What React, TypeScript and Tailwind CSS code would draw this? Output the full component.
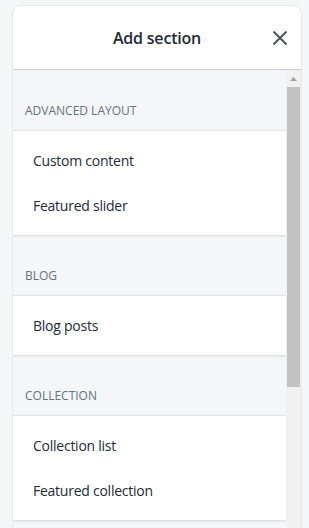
import React from "react";

const sections = [
  { title: "ADVANCED LAYOUT", items: ["Custom content", "Featured slider"] },
  { title: "BLOG", items: ["Blog posts"] },
  { title: "COLLECTION", items: ["Collection list", "Featured collection"] },
];

export default function App() {
  return (
    <div
      className="w-[309px] h-[528px] overflow-hidden bg-[#f4f6f8] pl-[13px] pr-[8px] pt-[6px]"
      style={{ fontFamily: '"Segoe UI", "Open Sans", "Noto Sans", sans-serif' }}
    >
      <div className="h-[540px] flex flex-col bg-white rounded-t-[8px] shadow-[0_0_0_1px_#e6e9ec] overflow-hidden">
        <div className="h-[64px] shrink-0 relative flex items-center justify-center border-b border-[#c4cdd5]">
          <span className="text-[16px] font-semibold text-[#212b36] tracking-[-0.2px]">Add section</span>
          <svg
            className="absolute left-[259px] top-[24px]"
            width="16"
            height="16"
            viewBox="0 0 16 16"
            fill="none"
          >
            <path d="M1.5 1.5L14.5 14.5M14.5 1.5L1.5 14.5" stroke="#454f5b" strokeWidth="1.8" />
          </svg>
        </div>
        <div className="flex flex-1 bg-[#f4f6f8]">
          <div className="flex-1 flex flex-col">
            {sections.map((s) => (
              <div key={s.title}>
                <div className="h-[60px] pl-[12px] pt-[33px] text-[12px] leading-[16px] text-[#637381]">
                  {s.title}
                </div>
                <div className="bg-white py-[7px] border-t border-[#e3e6e9] shadow-[0_1px_2px_0_rgba(63,63,68,0.18)]">
                  {s.items.map((it) => (
                    <div
                      key={it}
                      className="h-[45px] flex items-center pl-[20px] text-[14px] tracking-[-0.25px] text-[#212b36]"
                    >
                      {it}
                    </div>
                  ))}
                </div>
              </div>
            ))}
          </div>
          <div className="w-[15px] shrink-0 bg-[#f1f1f1] flex flex-col items-center">
            <div className="h-[17px] w-full flex items-center justify-center">
              <svg width="7" height="4" viewBox="0 0 7 4">
                <path d="M0 4L3.5 0L7 4Z" fill="#a3a3a3" />
              </svg>
            </div>
            <div className="w-[13px] h-[300px] bg-[#c1c1c1]" />
          </div>
        </div>
      </div>
    </div>
  );
}
